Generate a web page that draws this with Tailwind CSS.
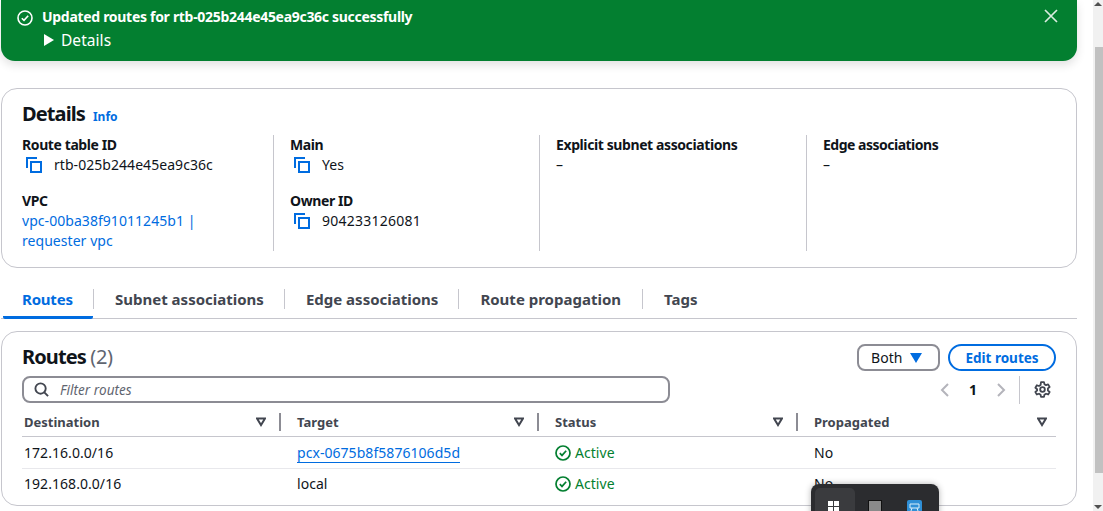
<!DOCTYPE html>
<html lang="en">
<head>
  <meta charset="UTF-8" />
  <title>Route table detail</title>
  <script src="https://cdn.jsdelivr.net/npm/@tailwindcss/browser@4"></script>
</head>
<body class="bg-white h-[511px] overflow-hidden relative flex font-['Noto_Sans',sans-serif] text-[14px] leading-5 tracking-[0.05px] text-[#0f141a]">
  <!-- Page -->
  <div class="w-[1076px] ml-px shrink-0">
    <!-- Flash -->
    <div class="h-[61px] bg-[#037f30] rounded-b-[14px] shadow-[0_4px_10px_rgba(0,0,0,0.12)] text-white pl-4 pr-[18px] pt-[7px] flex">
      <svg class="w-4 h-4 mt-[3px] mr-[9px] shrink-0" viewBox="0 0 16 16" fill="none" stroke="currentColor" stroke-width="1.6"><circle cx="8" cy="8" r="7"/><path d="M4.800 8.200l2.200 2.200 4.200-4.600"/></svg>
      <div class="flex-1">
        <div class="font-bold tracking-[-0.3px]">Updated routes for rtb-025b244e45ea9c36c successfully</div>
        <div class="flex items-center mt-[3px] ml-[2px]">
          <svg class="w-2.5 h-3 mr-[7px]" viewBox="0 0 10 12" fill="currentColor"><path d="M0 0l10 6-10 6z"/></svg>
          <span class="text-[15.5px]">Details</span>
        </div>
      </div>
      <svg class="w-4 h-4 mt-px opacity-85" viewBox="0 0 16 16" fill="none" stroke="currentColor" stroke-width="1.7"><path d="M2 2l12 12M14 2L2 14"/></svg>
    </div>

    <!-- Details card -->
    <section class="mt-[27px] h-[180px] border border-[#c6c6cd] rounded-[16px] pl-[20px] pt-[11px]">
      <div class="flex items-baseline">
        <h2 class="text-[20px] leading-7 font-bold tracking-[-0.9px]">Details</h2>
        <a class="ml-2 text-[12px] font-bold tracking-normal text-[#006ce0]">Info</a>
      </div>
      <div class="grid grid-cols-[252px_266px_267px_249px] mt-[7px] h-[116px]">
        <div class="border-r border-[#c6c6cd] flex flex-col">
          <div class="font-bold tracking-[-0.4px]">Route table ID</div>
          <div class="flex items-center">
            <svg class="w-4 h-4 ml-1 mr-3 text-[#006ce0]" viewBox="0 0 16 16" fill="none" stroke="currentColor" stroke-width="2"><path d="M1 11V1h10"/><rect x="5" y="5" width="10" height="10"/></svg>
            <span>rtb-025b244e45ea9c36c</span>
          </div>
          <div class="font-bold tracking-[-0.4px] mt-4">VPC</div>
          <a class="text-[#006ce0]">vpc-00ba38f91011245b1 |<br>requester vpc</a>
        </div>
        <div class="border-r border-[#c6c6cd] pl-4 flex flex-col">
          <div class="font-bold tracking-[-0.4px]">Main</div>
          <div class="flex items-center">
            <svg class="w-4 h-4 ml-1 mr-3 text-[#006ce0]" viewBox="0 0 16 16" fill="none" stroke="currentColor" stroke-width="2"><path d="M1 11V1h10"/><rect x="5" y="5" width="10" height="10"/></svg>
            <span>Yes</span>
          </div>
          <div class="font-bold tracking-[-0.4px] mt-4">Owner ID</div>
          <div class="flex items-center">
            <svg class="w-4 h-4 ml-1 mr-3 text-[#006ce0]" viewBox="0 0 16 16" fill="none" stroke="currentColor" stroke-width="2"><path d="M1 11V1h10"/><rect x="5" y="5" width="10" height="10"/></svg>
            <span class="tracking-[0.25px]">904233126081</span>
          </div>
        </div>
        <div class="border-r border-[#c6c6cd] pl-4">
          <div class="font-bold tracking-[-0.4px]">Explicit subnet associations</div>
          <div>–</div>
        </div>
        <div class="pl-4">
          <div class="font-bold tracking-[-0.5px]">Edge associations</div>
          <div>–</div>
        </div>
      </div>
    </section>

    <!-- Tabs -->
    <nav class="mt-5 h-[31px] border-b border-[#c6c6cd] flex text-[#424650] font-bold text-[15px] tracking-normal">
      <div class="w-[90px] ml-0.5 pl-[19px] text-[#006ce0] tracking-[-0.2px] border-b-[3px] border-[#006ce0] rounded-[2px] h-[31px] -mb-px pt-px">Routes</div>
      <div class="h-5 mt-px border-l border-[#c6c6cd] pl-[21px] pr-5">Subnet associations</div>
      <div class="h-5 mt-px border-l border-[#c6c6cd] pl-[21px] pr-5">Edge associations</div>
      <div class="h-5 mt-px border-l border-[#c6c6cd] pl-[21px] pr-[21px]">Route propagation</div>
      <div class="h-5 mt-px border-l border-[#c6c6cd] pl-[21px]">Tags</div>
    </nav>

    <!-- Routes card -->
    <section class="mt-3 h-[175px] border border-[#c6c6cd] rounded-[16px] pl-5 pr-[20px] pt-[11px]">
      <div class="flex justify-between h-[33px]">
        <h2 class="text-[20px] leading-7 font-bold tracking-[-0.9px]">Routes <span class="font-normal tracking-[-0.3px] text-[#5f6570]">(2)</span></h2>
        <div class="flex gap-2 items-start pt-px">
          <div class="w-[83px] h-[27px] border-2 border-[#8c8c94] rounded-[8px] flex items-center justify-between pl-3 pr-4">
            <span>Both</span>
            <svg class="w-3 h-2.5 text-[#006ce0]" viewBox="0 0 12 10" fill="currentColor"><path d="M0 0h12L6 10z"/></svg>
          </div>
          <div class="w-[108px] h-[27px] border-2 border-[#006ce0] rounded-full flex items-center justify-center text-[#006ce0] font-bold tracking-normal text-[13.5px]">Edit routes</div>
        </div>
      </div>
      <div class="flex justify-between h-[31px]">
        <div class="w-[648px] h-[27px] border-2 border-[#8c8c94] rounded-[8px] flex items-center pl-[10px]">
          <svg class="w-[15px] h-[15px] text-[#424650] mr-[11px]" viewBox="0 0 16 16" fill="none" stroke="currentColor" stroke-width="2"><circle cx="7" cy="7" r="5.500"/><path d="M11 11l4 4"/></svg>
          <span class="italic text-[13.5px] text-[#5f6570]">Filter routes</span>
        </div>
        <div class="flex items-center h-[27px] text-[#b4b4bb] pr-[5px]">
          <svg class="w-3 h-4" viewBox="0 0 12 16" fill="none" stroke="currentColor" stroke-width="2"><path d="M9 2L3 8l6 6"/></svg>
          <span class="mx-[18px] font-bold text-[#0f141a]">1</span>
          <svg class="w-3 h-4" viewBox="0 0 12 16" fill="none" stroke="currentColor" stroke-width="2"><path d="M3 2l6 6-6 6"/></svg>
          <div class="h-7 border-l border-[#c6c6cd] ml-3 pl-[14px] flex items-center">
            <svg class="w-[17px] h-[17px] text-[#424650]" viewBox="0 0 16 16" fill="none" stroke="currentColor" stroke-width="1.700" stroke-linejoin="round"><path d="M6.600 1h2.800l.4 2 1.500.9 2-.7 1.400 2.400-1.600 1.400v1.900l1.600 1.400-1.400 2.400-2-.7-1.500.9-.4 2H6.600l-.4-2-1.500-.9-2 .7-1.400-2.400 1.600-1.400V7.800L1.300 6.400l1.400-2.400 2 .7 1.500-.9z"/><circle cx="8" cy="8" r="2.200"/></svg>
          </div>
        </div>
      </div>
      <!-- Table -->
      <div class="w-[1034px]">
        <div class="grid grid-cols-[259px_258px_259px_258px] h-[30px] border-b border-[#c6c6cd] text-[#424650] font-bold tracking-normal text-[13px] items-center">
          <div class="flex items-center justify-between pl-[2px]"><span>Destination</span><span class="flex items-center"><svg class="w-2.5 h-2.5 mr-[13px]" viewBox="0 0 10 10" fill="none" stroke="currentColor" stroke-width="2"><path d="M1 1.500h8L5 8z"/></svg><i class="h-[18px] border-l-2 border-[#8c8c94]"></i></span></div>
          <div class="flex items-center justify-between pl-4"><span>Target</span><span class="flex items-center"><svg class="w-2.5 h-2.5 mr-[13px]" viewBox="0 0 10 10" fill="none" stroke="currentColor" stroke-width="2"><path d="M1 1.500h8L5 8z"/></svg><i class="h-[18px] border-l-2 border-[#8c8c94]"></i></span></div>
          <div class="flex items-center justify-between pl-4"><span>Status</span><span class="flex items-center"><svg class="w-2.5 h-2.5 mr-[13px]" viewBox="0 0 10 10" fill="none" stroke="currentColor" stroke-width="2"><path d="M1 1.500h8L5 8z"/></svg><i class="h-[18px] border-l-2 border-[#8c8c94]"></i></span></div>
          <div class="flex items-center justify-between pl-4 pr-[9px]"><span>Propagated</span><svg class="w-2.5 h-2.5" viewBox="0 0 10 10" fill="none" stroke="currentColor" stroke-width="2"><path d="M1 1.500h8L5 8z"/></svg></div>
        </div>
        <div class="grid grid-cols-[259px_258px_259px_258px] h-[32px] border-b border-[#e8e8ec] items-center">
          <div class="pl-[2px]">172.16.0.0/16</div>
          <div class="pl-4"><a class="text-[#006ce0] border-b border-[#006ce0]">pcx-0675b8f5876106d5d</a></div>
          <div class="pl-4 flex items-center text-[#037f30]"><svg class="w-4 h-4 mr-1" viewBox="0 0 16 16" fill="none" stroke="currentColor" stroke-width="1.700"><circle cx="8" cy="8" r="7"/><path d="M4.800 8.200l2.200 2.200 4.200-4.600"/></svg>Active</div>
          <div class="pl-4">No</div>
        </div>
        <div class="grid grid-cols-[259px_258px_259px_258px] h-[30px] items-center">
          <div class="pl-[2px]">192.168.0.0/16</div>
          <div class="pl-4">local</div>
          <div class="pl-4 flex items-center text-[#037f30]"><svg class="w-4 h-4 mr-1" viewBox="0 0 16 16" fill="none" stroke="currentColor" stroke-width="1.700"><circle cx="8" cy="8" r="7"/><path d="M4.800 8.200l2.200 2.200 4.200-4.600"/></svg>Active</div>
          <div class="pl-4">No</div>
        </div>
      </div>
    </section>
  </div>

  <!-- Scrollbar -->
  <div class="absolute top-0 bottom-0 right-0 w-[10px] bg-[#f1f1f1] flex flex-col justify-between">
    <div>
      <svg class="w-[10px] h-[10px] text-[#505050]" viewBox="0 0 10 10" fill="currentColor"><path d="M1 6l4-4 4 4z"/></svg>
      <div class="mt-[37px] ml-[2px] h-[426px] bg-[#c1c1c1]"></div>
    </div>
    <svg class="w-[10px] h-[10px] text-[#505050]" viewBox="0 0 10 10" fill="currentColor"><path d="M1 4l4 4 4-4z"/></svg>
  </div>

  <!-- Taskbar thumbnail popup over the page -->
  <div class="absolute left-[811px] top-[484px] w-[128px] h-[40px] bg-[#2b2c2f] rounded-[8px] shadow-[0_0_6px_rgba(0,0,0,0.3)]">
    <div class="absolute left-1 top-1 w-10 h-10 bg-[#3a3b3e] rounded-[5px]"></div>
    <div class="absolute left-[17px] top-[17px] grid grid-cols-2 gap-px w-[11px] h-[11px]">
      <i class="bg-white"></i><i class="bg-white"></i><i class="bg-white"></i><i class="bg-white"></i>
    </div>
    <div class="absolute left-[57px] top-[16px] w-[14px] h-[14px] bg-[#8a8a8a] border border-[#111]"></div>
    <svg class="absolute left-[96px] top-[16px] w-[15px] h-[14px]" viewBox="0 0 15 14"><rect width="15" height="14" rx="2" fill="#2f8fd6"/><path d="M3 4h9v4H3zM5 8l-1 3M10 8l1 3" fill="none" stroke="#d8eefa" stroke-width="1"/></svg>
  </div>
</body>
</html>
